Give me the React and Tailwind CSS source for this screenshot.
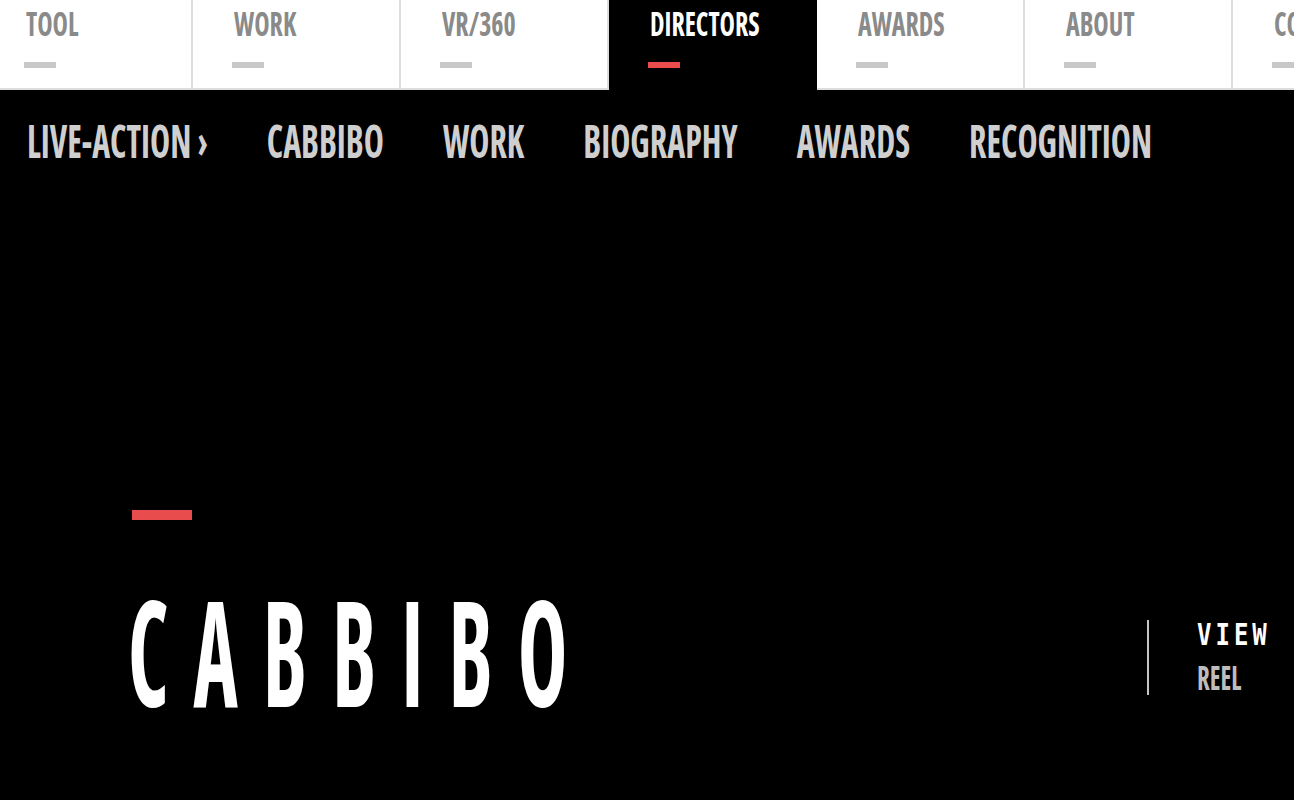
const tabs = ['TOOL', 'WORK', 'VR/360', 'DIRECTORS', 'AWARDS', 'ABOUT', 'CONTACT'];
const subnav = ['LIVE-ACTION ›', 'CABBIBO', 'WORK', 'BIOGRAPHY', 'AWARDS', 'RECOGNITION'];

// condensed face of Open Sans, stretched upward to get the tall poster look
const cond = "font-['Open_Sans',sans-serif] [font-stretch:75%] font-bold inline-block leading-none whitespace-nowrap origin-[50%_88.8%]";

function Tab({ label, active }) {
  return (
    <div
      className={
        'shrink-0 w-[208px] h-[90px] pl-[41px] pt-[13px] flex flex-col ' +
        (active ? 'bg-black' : 'bg-white border-r-2 border-b-2 border-[#dddddd]')
      }
    >
      <span className={cond + ' text-[26px] scale-y-[1.29] ' + (active ? 'text-white' : 'text-[#8a8a8a]')}>
        {label}
      </span>
      <div className={'-ml-[2px] mt-[23px] w-[32px] h-[6px] ' + (active ? 'bg-[#e84c4c]' : 'bg-[#c8c8c8]')} />
    </div>
  );
}

export default function App() {
  return (
    <div className="min-h-screen bg-black overflow-hidden">
      <div className="flex -ml-[15px] bg-white">
        {tabs.map((t) => (
          <Tab key={t} label={t} active={t === 'DIRECTORS'} />
        ))}
      </div>

      <nav className="h-[110px] pl-[27px] pt-[38px] flex items-start gap-[59px]">
        {subnav.map((s) => (
          <span key={s} className={cond + ' text-[34px] text-[#cfcfcf] scale-y-[1.36]'}>
            {s}
          </span>
        ))}
      </nav>

      <section className="flex items-start">
        <div className="pl-[132px] pt-[310px] flex flex-col items-start">
          <div className="w-[60px] h-[10px] bg-[#e84c4c]" />
          <h1 className={cond + ' -ml-[4px] mt-[113px] text-[84px] text-white tracking-[25px] scale-y-[1.75]'}>
            CABBIBO
          </h1>
        </div>

        <div className="ml-auto w-[147px] pt-[420px] flex items-start">
          <div className="w-[2px] h-[75px] bg-[#c4c4c4]" />
          <div className="pl-[48px] pt-[5px] flex flex-col items-start">
            <span className="inline-block font-['DejaVu_Sans_Mono',monospace] font-bold text-[24px] leading-none text-white tracking-[4px] scale-y-[1.26] origin-[50%_84.6%]">
              VIEW
            </span>
            <span className={cond + ' mt-[19px] text-[25px] text-[#bdbdbd] scale-y-[1.34]'}>
              REEL
            </span>
          </div>
        </div>
      </section>
    </div>
  );
}
